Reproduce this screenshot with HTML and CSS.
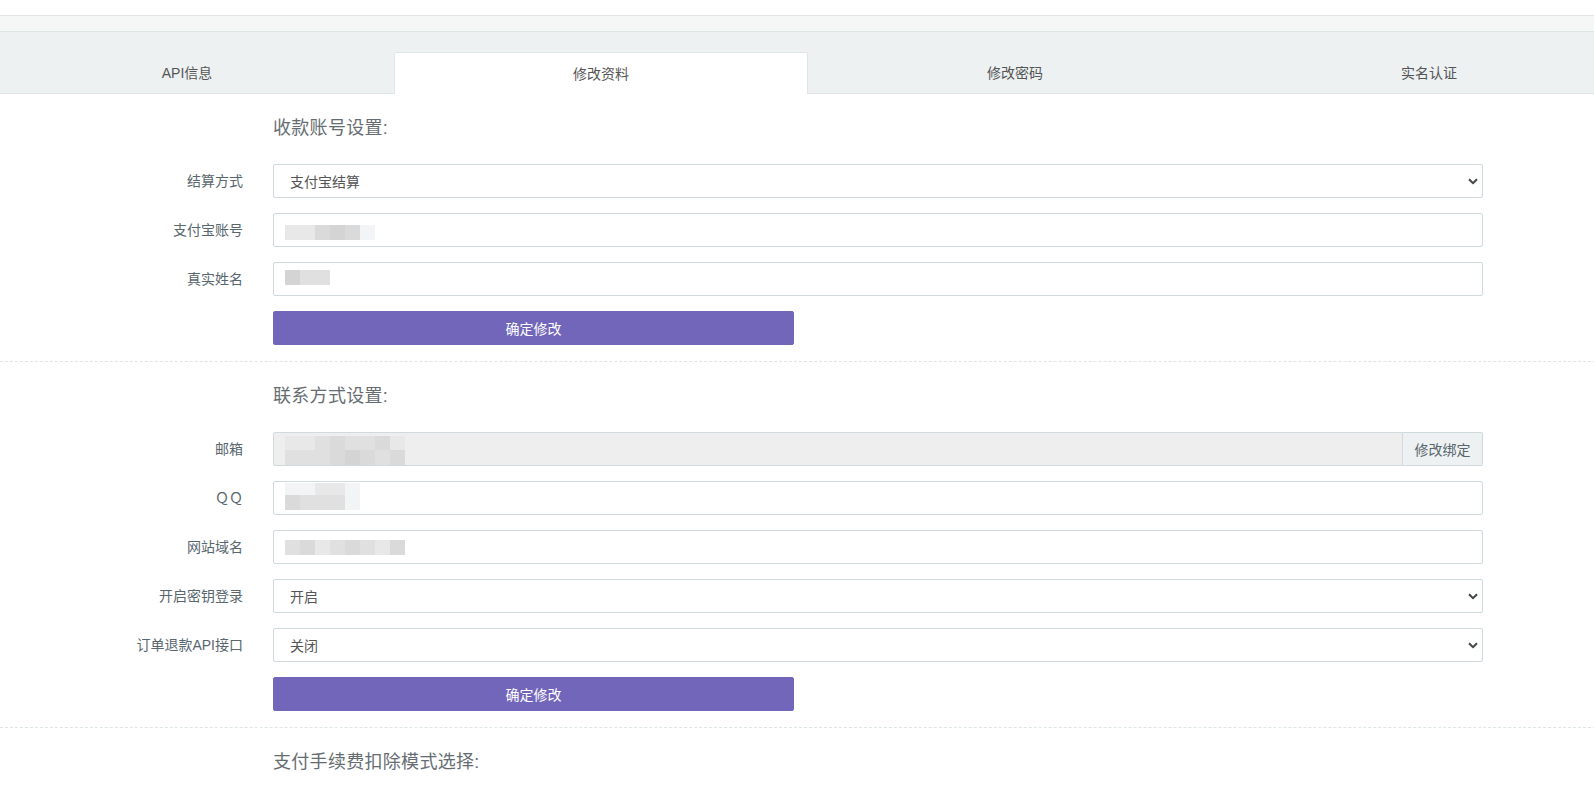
FILE: index.html
```html
<!DOCTYPE html>
<html lang="zh-CN">
<head>
<meta charset="utf-8">
<title>修改资料</title>
<link rel="stylesheet" href="styles.css">
</head>
<body>
<div class="topbar"></div>
<div class="band"></div>
<div class="page">
  <nav class="tabs">
    <div class="tab">API信息</div>
    <div class="tab active">修改资料</div>
    <div class="tab">修改密码</div>
    <div class="tab">实名认证</div>
  </nav>

  <section class="section">
    <div class="row title-row"><div class="label"></div><h4 class="title">收款账号设置:</h4></div>
    <div class="row">
      <div class="label">结算方式</div>
      <div class="field"><div class="control select"><span>支付宝结算</span><svg class="chev" width="10" height="7" viewBox="0 0 10 7"><path d="M1 1.2 5 5.2 9 1.2" fill="none" stroke="#444" stroke-width="2"/></svg></div></div>
    </div>
    <div class="row">
      <div class="label">支付宝账号</div>
      <div class="field"><div class="control"></div>
        <div class="mosaic mz-alipay"><div class="mrow h15"><i class="c1"></i><i class="c1"></i><i class="c2"></i><i class="c3"></i><i class="c2"></i><i class="c4"></i></div></div>
      </div>
    </div>
    <div class="row">
      <div class="label">真实姓名</div>
      <div class="field"><div class="control"></div>
        <div class="mosaic mz-name"><div class="mrow h15"><i class="c3"></i><i class="c5"></i><i class="c5"></i></div></div>
      </div>
    </div>
    <div class="row">
      <div class="label"></div>
      <div class="field"><button class="btn">确定修改</button></div>
    </div>
  </section>

  <div class="sep"></div>

  <section class="section">
    <div class="row title-row"><div class="label"></div><h4 class="title">联系方式设置:</h4></div>
    <div class="row">
      <div class="label">邮箱</div>
      <div class="field">
        <div class="input-group"><div class="control disabled"></div><div class="addon">修改绑定</div></div>
        <div class="mosaic mz-mail">
          <div class="mrow h14"><i class="c1"></i><i class="c1"></i><i class="c5"></i><i class="c2"></i><i class="c5"></i><i class="c5"></i><i class="c2"></i><i class="c1"></i></div>
          <div class="mrow h15"><i class="c5"></i><i class="c5"></i><i class="c5"></i><i class="c2"></i><i class="c3"></i><i class="c2"></i><i class="c5"></i><i class="c2"></i></div>
        </div>
      </div>
    </div>
    <div class="row">
      <div class="label">ＱＱ</div>
      <div class="field"><div class="control"></div>
        <div class="mosaic mz-qq">
          <div class="mrow h12"><i class="c4"></i><i class="c4"></i><i class="c1"></i><i class="c1"></i><i class="c4"></i></div>
          <div class="mrow h15"><i class="c2"></i><i class="c5"></i><i class="c5"></i><i class="c5"></i><i class="c4"></i></div>
        </div>
      </div>
    </div>
    <div class="row">
      <div class="label">网站域名</div>
      <div class="field"><div class="control"></div>
        <div class="mosaic mz-site"><div class="mrow h15"><i class="c5"></i><i class="c2"></i><i class="c1"></i><i class="c5"></i><i class="c2"></i><i class="c5"></i><i class="c1"></i><i class="c2"></i></div></div>
      </div>
    </div>
    <div class="row">
      <div class="label">开启密钥登录</div>
      <div class="field"><div class="control select"><span>开启</span><svg class="chev" width="10" height="7" viewBox="0 0 10 7"><path d="M1 1.2 5 5.2 9 1.2" fill="none" stroke="#444" stroke-width="2"/></svg></div></div>
    </div>
    <div class="row">
      <div class="label">订单退款API接口</div>
      <div class="field"><div class="control select"><span>关闭</span><svg class="chev" width="10" height="7" viewBox="0 0 10 7"><path d="M1 1.2 5 5.2 9 1.2" fill="none" stroke="#444" stroke-width="2"/></svg></div></div>
    </div>
    <div class="row">
      <div class="label"></div>
      <div class="field"><button class="btn">确定修改</button></div>
    </div>
  </section>

  <div class="sep"></div>

  <section class="section">
    <div class="row title-row"><div class="label"></div><h4 class="title">支付手续费扣除模式选择:</h4></div>
  </section>
</div>
</body>
</html>
```
FILE: styles.css
```css
html, body {
  margin: 0;
  padding: 0;
  background: #fff;
  overflow: hidden;
}
body {
  font-family: "Liberation Sans", "Noto Sans CJK SC", sans-serif;
  font-size: 14px;
  color: #58666e;
}
.topbar {
  height: 15px;
  background: #fff;
  border-bottom: 1px solid #e1e5e7;
}
.band {
  height: 15px;
  background: #f5f7f7;
  border-bottom: 1px solid #dee5e7;
}
.page {
  width: 1656px;
  margin-left: -20px;
}
.tabs {
  display: flex;
  height: 41px;
  padding-top: 20px;
  background: #edf1f2;
  border-bottom: 1px solid #dee5e7;
}
.tab {
  width: 414px;
  height: 41px;
  box-sizing: border-box;
  display: flex;
  align-items: center;
  justify-content: center;
  color: #555;
  font-size: 14px;
  line-height: 20px;
  border: 1px solid transparent;
  border-bottom: 0;
}
.tab.active {
  height: 42px;
  background: #fff;
  border-color: #dee5e7;
  border-radius: 2px 2px 0 0;
  padding-top: 1px;
}
.section {
  display: flex;
  flex-direction: column;
}
.row {
  display: flex;
  align-items: center;
  margin-bottom: 15px;
}
.title-row {
  margin-bottom: 0;
}
.label {
  width: 263px;
  padding-right: 15px;
  text-align: right;
  font-size: 14px;
  line-height: 20px;
  color: #58666e;
  flex-shrink: 0;
}
.title {
  margin: 24px 0 26px 15px;
  font-size: 18px;
  line-height: 20px;
  font-weight: normal;
  color: #666d72;
  letter-spacing: 0.3px;
}
.field {
  margin-left: 15px;
  width: 1210px;
  position: relative;
}
.control {
  height: 34px;
  box-sizing: border-box;
  border: 1px solid #cfdadd;
  border-radius: 2px;
  background: #fff;
  display: flex;
  align-items: center;
  padding: 0 16px;
  color: #555;
  font-size: 14px;
}
.select {
  padding-right: 4px;
}
.select span {
  flex: 1;
}
.chev {
  display: block;
  margin-top: 1px;
}
.input-group {
  display: flex;
}
.input-group .control {
  flex: 1;
  border-radius: 2px 0 0 2px;
}
.control.disabled {
  background: #eeeeee;
}
.addon {
  width: 80px;
  height: 34px;
  box-sizing: border-box;
  border: 1px solid #cfdadd;
  border-left: 0;
  border-radius: 0 2px 2px 0;
  background: #edf1f2;
  display: flex;
  align-items: center;
  justify-content: center;
  color: #58666e;
  font-size: 14px;
}
.btn {
  display: block;
  width: 521px;
  height: 34px;
  box-sizing: border-box;
  border: 1px solid #7266ba;
  border-radius: 2px;
  background: #7266ba;
  color: #fff;
  font-family: inherit;
  font-size: 14px;
  padding: 0;
  cursor: pointer;
}
.sep {
  margin-top: 1px;
  border-top: 1px dashed #dee5e7;
}
.mosaic {
  position: absolute;
  left: 12px;
  display: flex;
  flex-direction: column;
}
.mrow {
  display: flex;
}
.mrow i {
  display: block;
  width: 15px;
}
.h12 i { height: 12px; }
.h14 i { height: 14px; }
.h15 i { height: 15px; }
.c1 { background: #e8e8e9; }
.c2 { background: #dadada; }
.c3 { background: #d4d4d4; }
.c4 { background: #f3f4f6; }
.c5 { background: #e0e0e0; }
.mz-alipay { top: 12px; }
.mz-name { top: 8px; }
.mz-mail { top: 4px; }
.mz-qq { top: 2px; }
.mz-site { top: 10px; }
```
